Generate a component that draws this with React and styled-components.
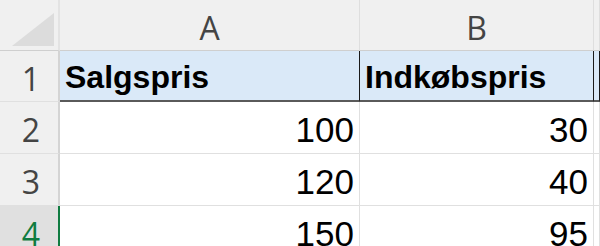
import React from 'react'
import styled, { createGlobalStyle } from 'styled-components'

const Global = createGlobalStyle`
  html, body { margin: 0; padding: 0; background: #ffffff; overflow: hidden; }
`

const Sheet = styled.div`
  display: grid;
  grid-template-columns: 60px 300px 234px 1fr;
  grid-template-rows: 51px 51px 52px 52px 52px;
  width: 600px;
  height: 246px;
  overflow: hidden;
`

const Corner = styled.div`
  background: #f0f0f0;
  border-right: 2px solid #e3e3e3;
  border-bottom: 1px solid #cfcfcf;
  box-sizing: border-box;
  display: flex;
  align-items: flex-end;
  justify-content: flex-end;
  padding: 0 4px 4px 0;
`

const ColHead = styled.div`
  background: #f0f0f0;
  border-right: 1px solid #dedede;
  border-bottom: 1px solid #cfcfcf;
  box-sizing: border-box;
  display: flex;
  align-items: center;
  justify-content: center;
  padding-top: 4px;
  font-family: 'Open Sans', 'Liberation Sans', sans-serif;
  font-size: 32px;
  color: #444444;
`

const RowHead = styled.div`
  background: ${p => (p.$active ? '#e0e0e0' : '#f0f0f0')};
  border-right: 2px solid ${p => (p.$active ? '#107c41' : '#d4d4d4')};
  border-bottom: 1px solid #e0e0e0;
  box-sizing: border-box;
  display: flex;
  align-items: center;
  justify-content: center;
  padding: 4px 0 0 4px;
  font-family: 'Open Sans', 'Liberation Sans', sans-serif;
  font-size: 32px;
  color: ${p => (p.$active ? '#107c41' : '#444444')};
`

const TitleCell = styled.div`
  background: #dae9f8;
  border-right: 1px solid #1a1a1a;
  border-bottom: 2px solid #5a5a5a;
  box-sizing: border-box;
  display: flex;
  align-items: center;
  padding: 3px 0 0 5px;
  font-family: 'Liberation Sans', Arial, sans-serif;
  font-weight: bold;
  font-size: 32px;
  color: #000000;
  white-space: nowrap;
  overflow: hidden;
`

const Cell = styled.div`
  border-right: 1px solid #e0e0e0;
  border-bottom: 1px solid #e0e0e0;
  box-sizing: border-box;
  display: flex;
  align-items: center;
  justify-content: flex-end;
  padding: 4px 5px 0 0;
  font-family: 'Liberation Sans', Arial, sans-serif;
  font-size: 35px;
  color: #000000;
  white-space: nowrap;
`

const rows = [
  [100, 30],
  [120, 40],
  [150, 95],
]

export default function App() {
  return (
    <>
      <Global />
      <Sheet>
        <Corner>
          <svg width="42" height="33" viewBox="0 0 42 33">
            <polygon points="42,0 42,33 0,33" fill="#dcdcdc" />
          </svg>
        </Corner>
        <ColHead>A</ColHead>
        <ColHead>B</ColHead>
        <ColHead />

        <RowHead>1</RowHead>
        <TitleCell>Salgspris</TitleCell>
        <TitleCell>Indkøbspris</TitleCell>
        <TitleCell />

        {rows.map((r, i) => (
          <React.Fragment key={i}>
            <RowHead $active={i === 2}>{i + 2}</RowHead>
            <Cell>{r[0]}</Cell>
            <Cell>{r[1]}</Cell>
            <Cell />
          </React.Fragment>
        ))}
      </Sheet>
    </>
  )
}
